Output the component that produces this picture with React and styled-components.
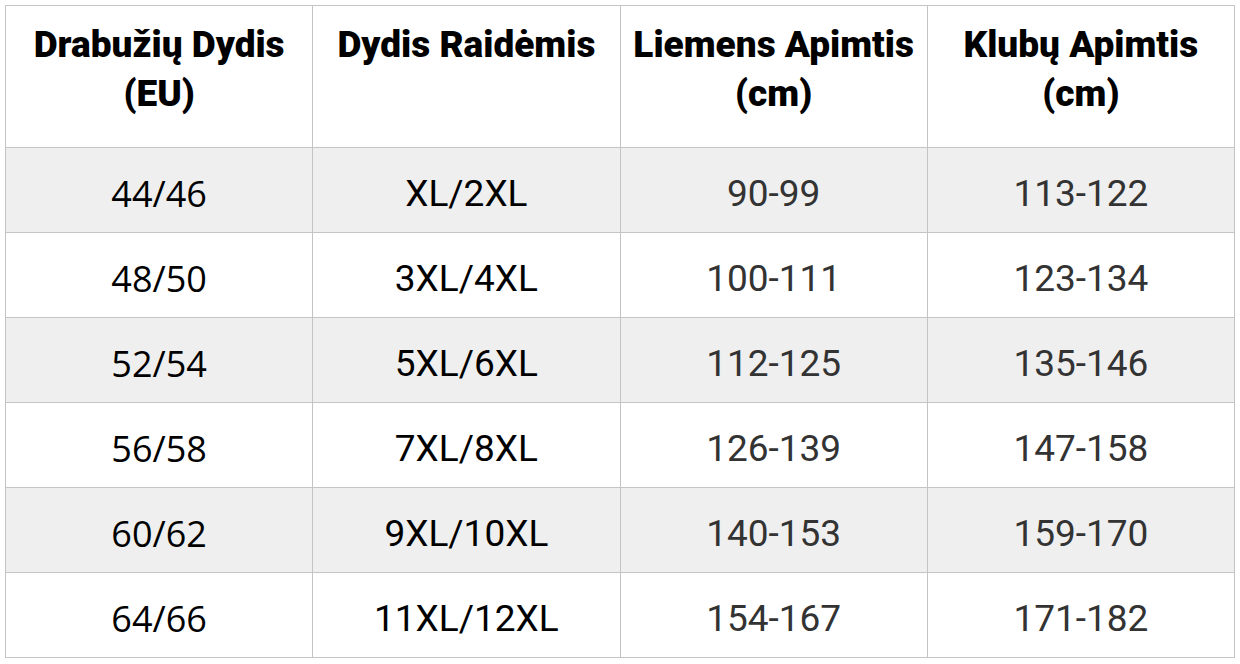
import React from "react";
import styled, { createGlobalStyle } from "styled-components";

const Global = createGlobalStyle`
  html, body { margin: 0; padding: 0; background: #fff; }
  body { padding: 5px; }
`;

const Table = styled.table`
  width: 1230px;
  border-collapse: collapse;
  table-layout: fixed;
`;

const Th = styled.th`
  border: 1px solid #c4c4c4;
  height: 142px;
  padding: 14px 4px 0;
  box-sizing: border-box;
  font-family: Roboto, "Liberation Sans", sans-serif;
  font-weight: 900;
  font-size: 37px;
  line-height: 49px;
  color: #000;
  vertical-align: top;
  text-align: center;
`;

const Row = styled.tr`
  background: ${(p) => (p.$alt ? "#efefef" : "#ffffff")};
`;

const fonts = {
  open: '"Open Sans", "Liberation Sans", sans-serif',
  roboto: 'Roboto, "Liberation Sans", sans-serif',
};

const Td = styled.td`
  border: 1px solid #c4c4c4;
  height: 85px;
  box-sizing: border-box;
  text-align: center;
  vertical-align: middle;
  padding: 6px 0 0;
  font-size: ${(p) => (p.$kind === "open" ? "36px" : "37px")};
  font-family: ${(p) => (p.$kind === "open" ? fonts.open : fonts.roboto)};
  color: ${(p) => (p.$kind === "num" ? "#333333" : "#000000")};
`;

const headerLines = [
  ["Drabužių Dydis", "(EU)"],
  ["Dydis Raidėmis"],
  ["Liemens Apimtis", "(cm)"],
  ["Klubų Apimtis", "(cm)"],
];

const kinds = ["open", "letters", "num", "num"];

const rows = [
  ["44/46", "XL/2XL", "90-99", "113-122"],
  ["48/50", "3XL/4XL", "100-111", "123-134"],
  ["52/54", "5XL/6XL", "112-125", "135-146"],
  ["56/58", "7XL/8XL", "126-139", "147-158"],
  ["60/62", "9XL/10XL", "140-153", "159-170"],
  ["64/66", "11XL/12XL", "154-167", "171-182"],
];

export default function App() {
  return (
    <>
      <Global />
      <Table>
        <thead>
          <tr>
            {headerLines.map((lines, i) => (
              <Th key={i}>
                {lines.map((l, j) => (
                  <React.Fragment key={j}>
                    {j > 0 && <br />}
                    {l}
                  </React.Fragment>
                ))}
              </Th>
            ))}
          </tr>
        </thead>
        <tbody>
          {rows.map((r, i) => (
            <Row key={r[0]} $alt={i % 2 === 0}>
              {r.map((c, j) => (
                <Td key={j} $kind={kinds[j]}>
                  {c}
                </Td>
              ))}
            </Row>
          ))}
        </tbody>
      </Table>
    </>
  );
}
